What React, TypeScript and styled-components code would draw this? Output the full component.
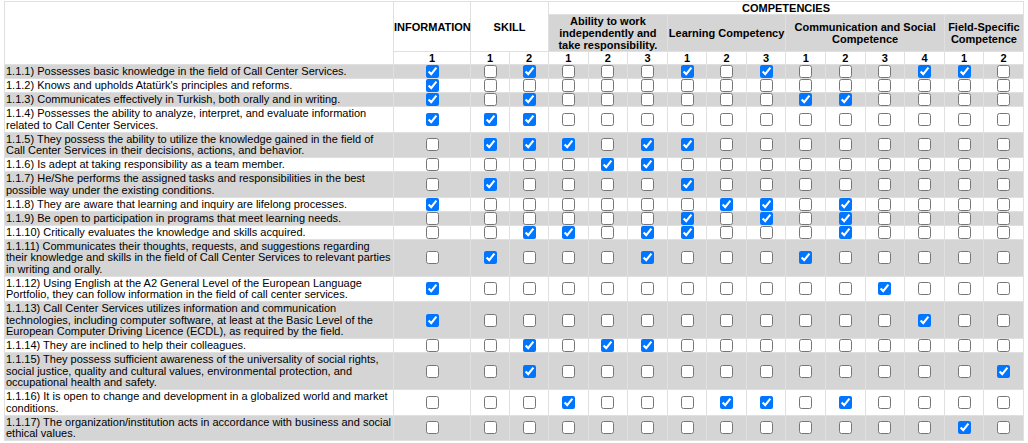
import styled, { createGlobalStyle } from "styled-components"

const GlobalStyle = createGlobalStyle`
  body {
    margin: 0;
    background: #fff;
    font-family: "Liberation Sans", Arial, sans-serif;
    color: #000;
  }
`

const Page = styled.div`
  padding: 1px 4px 2px;
`

const Table = styled.table`
  width: 1020px;
  table-layout: fixed;
  border-collapse: collapse;
  font-size: 11px;
  line-height: 12px;

  td,
  th {
    border: 1px solid #e0e0e0;
    padding: 0;
  }
`

const HeadCell = styled.th<{ $shaded?: boolean }>`
  font-weight: bold;
  text-align: center;
  vertical-align: middle;
  background: ${p => (p.$shaded ? "#d5d5d5" : "#fff")};
`

const NumCell = styled.th`
  font-weight: bold;
  text-align: center;
  background: #fff;
`

const Row = styled.tr<{ $shaded: boolean }>`
  background: ${p => (p.$shaded ? "#d5d5d5" : "#fff")};
`

const DescCell = styled.td`
  text-align: left;
  vertical-align: middle;
  line-height: 11.5px;
  && {
    padding: 1px 0 0.5px 1px;
  }
`

const CheckCell = styled.td`
  vertical-align: middle;
`

const Box = styled.input`
  display: block;
  margin: 0 auto;
  width: 13px;
  height: 13px;
`

const groups = [
  { title: "Ability to work independently and take responsibility.", count: 3 },
  { title: "Learning Competency", count: 3 },
  { title: "Communication and Social Competence", count: 4 },
  { title: "Field-Specific Competence", count: 2 },
]

const numbers = [1, 1, 2, ...groups.flatMap(g => Array.from({ length: g.count }, (_, i) => i + 1))]

const rows: { text: string; checked: number[] }[] = [
  { text: "1.1.1) Possesses basic knowledge in the field of Call Center Services.", checked: [0, 2, 6, 8, 12, 13] },
  { text: "1.1.2) Knows and upholds Atatürk's principles and reforms.", checked: [0] },
  { text: "1.1.3) Communicates effectively in Turkish, both orally and in writing.", checked: [0, 2, 9, 10] },
  { text: "1.1.4) Possesses the ability to analyze, interpret, and evaluate information related to Call Center Services.", checked: [0, 1, 2] },
  { text: "1.1.5) They possess the ability to utilize the knowledge gained in the field of Call Center Services in their decisions, actions, and behavior.", checked: [1, 2, 3, 5, 6] },
  { text: "1.1.6) Is adept at taking responsibility as a team member.", checked: [4, 5] },
  { text: "1.1.7) He/She performs the assigned tasks and responsibilities in the best possible way under the existing conditions.", checked: [1, 6] },
  { text: "1.1.8) They are aware that learning and inquiry are lifelong processes.", checked: [0, 7, 8, 10] },
  { text: "1.1.9) Be open to participation in programs that meet learning needs.", checked: [6, 8, 10] },
  { text: "1.1.10) Critically evaluates the knowledge and skills acquired.", checked: [2, 3, 5, 6, 10] },
  { text: "1.1.11) Communicates their thoughts, requests, and suggestions regarding their knowledge and skills in the field of Call Center Services to relevant parties in writing and orally.", checked: [1, 5, 9] },
  { text: "1.1.12) Using English at the A2 General Level of the European Language Portfolio, they can follow information in the field of call center services.", checked: [0, 11] },
  { text: "1.1.13) Call Center Services utilizes information and communication technologies, including computer software, at least at the Basic Level of the European Computer Driving Licence (ECDL), as required by the field.", checked: [0, 12] },
  { text: "1.1.14) They are inclined to help their colleagues.", checked: [2, 4, 5] },
  { text: "1.1.15) They possess sufficient awareness of the universality of social rights, social justice, quality and cultural values, environmental protection, and occupational health and safety.", checked: [2, 14] },
  { text: "1.1.16) It is open to change and development in a globalized world and market conditions.", checked: [3, 7, 8, 10] },
  { text: "1.1.17) The organization/institution acts in accordance with business and social ethical values.", checked: [13] },
]

export default function App() {
  return (
    <Page>
      <GlobalStyle />
      <Table>
        <colgroup>
          <col style={{ width: 389 }} />
          <col style={{ width: 77 }} />
          <col style={{ width: 39 }} />
          <col style={{ width: 39 }} />
          {Array.from({ length: 12 }, (_, i) => (
            <col key={i} />
          ))}
        </colgroup>
        <thead>
          <tr>
            <HeadCell rowSpan={3} />
            <HeadCell rowSpan={2}>INFORMATION</HeadCell>
            <HeadCell rowSpan={2} colSpan={2}>SKILL</HeadCell>
            <HeadCell colSpan={12}>COMPETENCIES</HeadCell>
          </tr>
          <tr>
            {groups.map(g => (
              <HeadCell key={g.title} colSpan={g.count} $shaded>
                {g.title}
              </HeadCell>
            ))}
          </tr>
          <tr>
            {numbers.map((n, i) => (
              <NumCell key={i}>{n}</NumCell>
            ))}
          </tr>
        </thead>
        <tbody>
          {rows.map((row, r) => (
            <Row key={row.text} $shaded={r % 2 === 0}>
              <DescCell>{row.text}</DescCell>
              {numbers.map((_, c) => (
                <CheckCell key={c}>
                  <Box type="checkbox" defaultChecked={row.checked.includes(c)} />
                </CheckCell>
              ))}
            </Row>
          ))}
        </tbody>
      </Table>
    </Page>
  )
}
